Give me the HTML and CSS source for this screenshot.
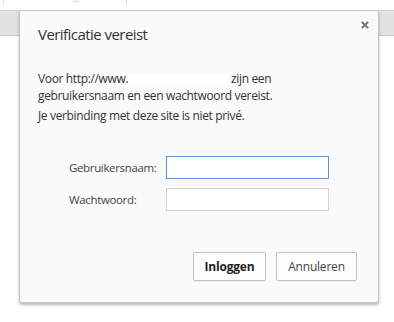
FILE: index.html
```html
<!DOCTYPE html>
<html lang="nl">
<head>
<meta charset="utf-8">
<link rel="stylesheet" href="styles.css">
</head>
<body>
<div class="page">
  <div class="topstrip">
    <span class="mark mark-a"></span>
    <span class="mark mark-b"></span>
    <span class="mark mark-c"></span>
  </div>
  <div class="toolbar"></div>
  <div class="content"></div>

  <div class="dialog" role="dialog">
    <div class="dialog-head">
      <h1 class="title">Verificatie vereist</h1>
      <button class="close" aria-label="Sluiten">
        <svg width="8" height="8" viewBox="0 0 8 8"><path d="M0.8 0.8 L7.2 7.2 M7.2 0.8 L0.8 7.2" stroke="#6b6b6b" stroke-width="1.8"/></svg>
      </button>
    </div>
    <div class="dialog-body">
      <p class="msg">Voor http://www.<span class="redact"></span> zijn een<br>gebruikersnaam en een wachtwoord vereist.</p>
      <p class="msg">Je verbinding met deze site is niet privé.</p>
      <div class="form">
        <label class="label" for="u">Gebruikersnaam:</label>
        <input class="field field-focus" id="u" type="text">
        <label class="label" for="p">Wachtwoord:</label>
        <input class="field" id="p" type="password">
      </div>
    </div>
    <div class="actions">
      <button class="btn btn-primary">Inloggen</button>
      <button class="btn btn-secondary">Annuleren</button>
    </div>
  </div>
</div>
</body>
</html>
```
FILE: styles.css
```css
html, body {
  margin: 0;
  padding: 0;
  background: #ffffff;
}
body {
  font-family: "Open Sans", "Noto Sans", sans-serif;
  color: #333333;
}
.page {
  position: relative;
  width: 394px;
  height: 322px;
  overflow: hidden;
}
.topstrip {
  position: relative;
  height: 10px;
  background: #ffffff;
}
.mark {
  position: absolute;
  background: #d8d8d8;
}
.mark-a { left: 3px; top: 0; width: 1px; height: 4px; }
.mark-b { left: 73px; top: 1px; width: 6px; height: 1px; }
.mark-c { left: 126px; top: 0; width: 1px; height: 4px; }
.toolbar {
  height: 24px;
  background: #e2e2e2;
  border-top: 1px solid #d4d4d4;
  border-bottom: 1px solid #c9c9c9;
}
.content {
  height: 286px;
  background: #ffffff;
}

.dialog {
  position: absolute;
  left: 19px;
  top: 10px;
  width: 360px;
  height: 293px;
  box-sizing: border-box;
  background: #fafafa;
  border: 1px solid #c6c6c6;
  border-radius: 3px;
  box-shadow: 0 2px 3px rgba(0, 0, 0, 0.28);
  display: flex;
  flex-direction: column;
}
.dialog-head {
  display: flex;
  justify-content: space-between;
  align-items: flex-start;
  padding: 10px 9px 0 18px;
}
.title {
  margin: 3px 0 0 0;
  font-size: 15px;
  font-weight: 400;
  line-height: 20px;
  color: #333333;
  letter-spacing: -0.55px;
}
.close {
  border: 0;
  background: transparent;
  padding: 0;
  width: 8px;
  height: 8px;
  display: flex;
}
.dialog-body {
  padding: 26px 18px 0 18px;
}
.msg {
  margin: 0 0 3px 0;
  font-size: 12px;
  line-height: 17px;
  color: #333333;
  letter-spacing: -0.35px;
}
.redact {
  display: inline-block;
  width: 100px;
  height: 13px;
  vertical-align: -3px;
  background: #ffffff;
}
.form {
  margin-top: 32px;
  display: grid;
  grid-template-columns: 96px 163px;
  column-gap: 1px;
  row-gap: 9px;
  align-items: center;
  padding-left: 31px;
}
.label {
  font-size: 11.5px;
  color: #444444;
  letter-spacing: -0.35px;
}
.field {
  box-sizing: border-box;
  width: 163px;
  height: 23px;
  margin: 0;
  border: 1px solid #d3d3d3;
  background: #ffffff;
  outline: none;
  padding: 0 4px;
}
.field-focus {
  border-color: #5f92d2;
}
.actions {
  margin-top: auto;
  display: flex;
  justify-content: flex-end;
  gap: 10px;
  padding: 0 21px 21px 0;
}
.btn {
  box-sizing: border-box;
  height: 29px;
  padding: 0;
  border: 1px solid #c3c3c3;
  border-radius: 2px;
  background: #fdfdfd;
  box-shadow: 0 1px 0 rgba(0, 0, 0, 0.06);
  font-family: "Open Sans", "Noto Sans", sans-serif;
  font-size: 12px;
  color: #444444;
  letter-spacing: -0.2px;
}
.btn-primary {
  width: 73px;
  font-weight: 700;
  color: #222222;
}
.btn-secondary {
  width: 81px;
}
```
